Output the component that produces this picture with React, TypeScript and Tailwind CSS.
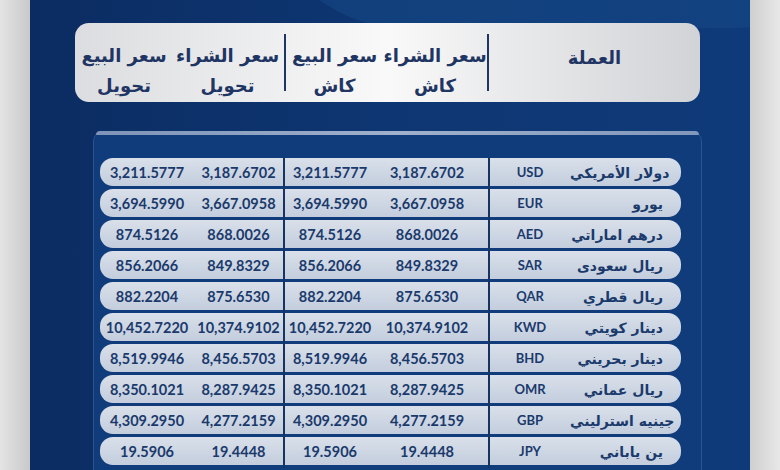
const rows = [
  { name: "دولار الأمريكي", code: "USD", buyCash: "3,187.6702", sellCash: "3,211.5777", buyTr: "3,187.6702", sellTr: "3,211.5777" },
  { name: "يورو", code: "EUR", buyCash: "3,667.0958", sellCash: "3,694.5990", buyTr: "3,667.0958", sellTr: "3,694.5990" },
  { name: "درهم اماراتي", code: "AED", buyCash: "868.0026", sellCash: "874.5126", buyTr: "868.0026", sellTr: "874.5126" },
  { name: "ريال سعودى", code: "SAR", buyCash: "849.8329", sellCash: "856.2066", buyTr: "849.8329", sellTr: "856.2066" },
  { name: "ريال قطري", code: "QAR", buyCash: "875.6530", sellCash: "882.2204", buyTr: "875.6530", sellTr: "882.2204" },
  { name: "دينار كويتي", code: "KWD", buyCash: "10,374.9102", sellCash: "10,452.7220", buyTr: "10,374.9102", sellTr: "10,452.7220" },
  { name: "دينار بحريني", code: "BHD", buyCash: "8,456.5703", sellCash: "8,519.9946", buyTr: "8,456.5703", sellTr: "8,519.9946" },
  { name: "ريال عماني", code: "OMR", buyCash: "8,287.9425", sellCash: "8,350.1021", buyTr: "8,287.9425", sellTr: "8,350.1021" },
  { name: "جينيه استرليني", code: "GBP", buyCash: "4,277.2159", sellCash: "4,309.2950", buyTr: "4,277.2159", sellTr: "4,309.2950" },
  { name: "ين ياباني", code: "JPY", buyCash: "19.4448", sellCash: "19.5906", buyTr: "19.4448", sellTr: "19.5906" },
]

const arabic = { fontFamily: '"DejaVu Sans", "Noto Sans", sans-serif' }
const latin = { fontFamily: 'Lato, "Open Sans", sans-serif' }

function HeaderCell({ top, bottom, className }: { top: string; bottom: string; className?: string }) {
  return (
    <div className={"flex flex-col items-center whitespace-nowrap pt-[17px] leading-[30px] " + (className ?? "")} dir="rtl">
      <span>{top}</span>
      <span>{bottom}</span>
    </div>
  )
}

export default function App() {
  return (
    <div className="flex h-[470px] w-[780px] overflow-hidden">
      {/* left frame */}
      <div className="w-[30px] bg-gradient-to-r from-[#e4e4e4] to-[#c9c9c9]" />

      {/* board */}
      <div className="relative w-[720px] overflow-hidden bg-gradient-to-r from-[#0b2c62] via-[#0e3672] to-[#0f3a79]">
        {/* soft light wedge at the top */}
        <div className="absolute -top-[262px] left-[230px] h-[290px] w-[620px] rounded-full bg-[#154886]/60" />
        <div className="relative flex flex-col">
          {/* header */}
          <div
            className="ml-[45px] mt-[23px] flex h-[79px] w-[625px] items-center rounded-[14px] bg-gradient-to-r from-[#dcdde0] via-[#f9f9f9] to-[#d2d3d7] text-[18px] font-bold text-[#1f3563]"
            style={arabic}
          >
            <HeaderCell className="w-[96px] pl-[2px]" top="سعر البيع" bottom="تحويل" />
            <HeaderCell className="w-[113px]" top="سعر الشراء" bottom="تحويل" />
            <div className="h-[57px] w-[2px] bg-[#1f3563]" />
            <HeaderCell className="w-[97px]" top="سعر البيع" bottom="كاش" />
            <HeaderCell className="w-[104px]" top="سعر الشراء" bottom="كاش" />
            <div className="h-[57px] w-[2px] bg-[#1f3563]" />
            <div className="flex flex-1 items-center justify-center pb-[10px]">
              <span>العملة</span>
            </div>
          </div>

          {/* table */}
          <div className="ml-[63px] mt-[29px] h-[360px] w-[609px] rounded-t-[10px] border-x border-[#2a5590] bg-[#103c7c]">
            <div className="mx-[2px] h-[4px] rounded-t-[6px] bg-gradient-to-r from-[#7d93b8] via-[#9fb1cc] to-[#8197bb]" />
            <div className="mt-[23px] flex flex-col gap-[3px] pl-[6px] pr-[20px]">
              {rows.map((r) => (
                <div
                  key={r.code}
                  className="flex h-[28px] items-center rounded-[13px] bg-gradient-to-b from-[#d9e0ea] to-[#c3cddd] text-[14.5px] font-bold text-[#1b3a6c]"
                >
                  <div className="flex w-[183px] items-center pt-[2px]" style={latin}>
                    <span className="w-[94px] text-center">{r.sellTr}</span>
                    <span className="w-[89px] text-center">{r.buyTr}</span>
                  </div>
                  <div className="h-[31px] w-[2px] self-start bg-[#17335f]" />
                  <div className="flex w-[203px] items-center pt-[2px]" style={latin}>
                    <span className="w-[90px] text-center">{r.sellCash}</span>
                    <span className="w-[104px] text-center">{r.buyCash}</span>
                  </div>
                  <div className="h-[31px] w-[2px] self-start bg-[#17335f]" />
                  <div className="flex min-w-0 flex-1 items-center pt-[2px]">
                    <span className="w-[80px] shrink-0 text-center text-[13px]" style={latin}>{r.code}</span>
                    <span className="flex-1 whitespace-nowrap pr-[18px] text-right text-[14px]" dir="rtl" style={arabic}>{r.name}</span>
                  </div>
                </div>
              ))}
            </div>
          </div>
        </div>
      </div>

      {/* right frame */}
      <div className="w-[30px] bg-gradient-to-r from-[#cfcfcf] to-[#e8e8e8]" />
    </div>
  )
}
